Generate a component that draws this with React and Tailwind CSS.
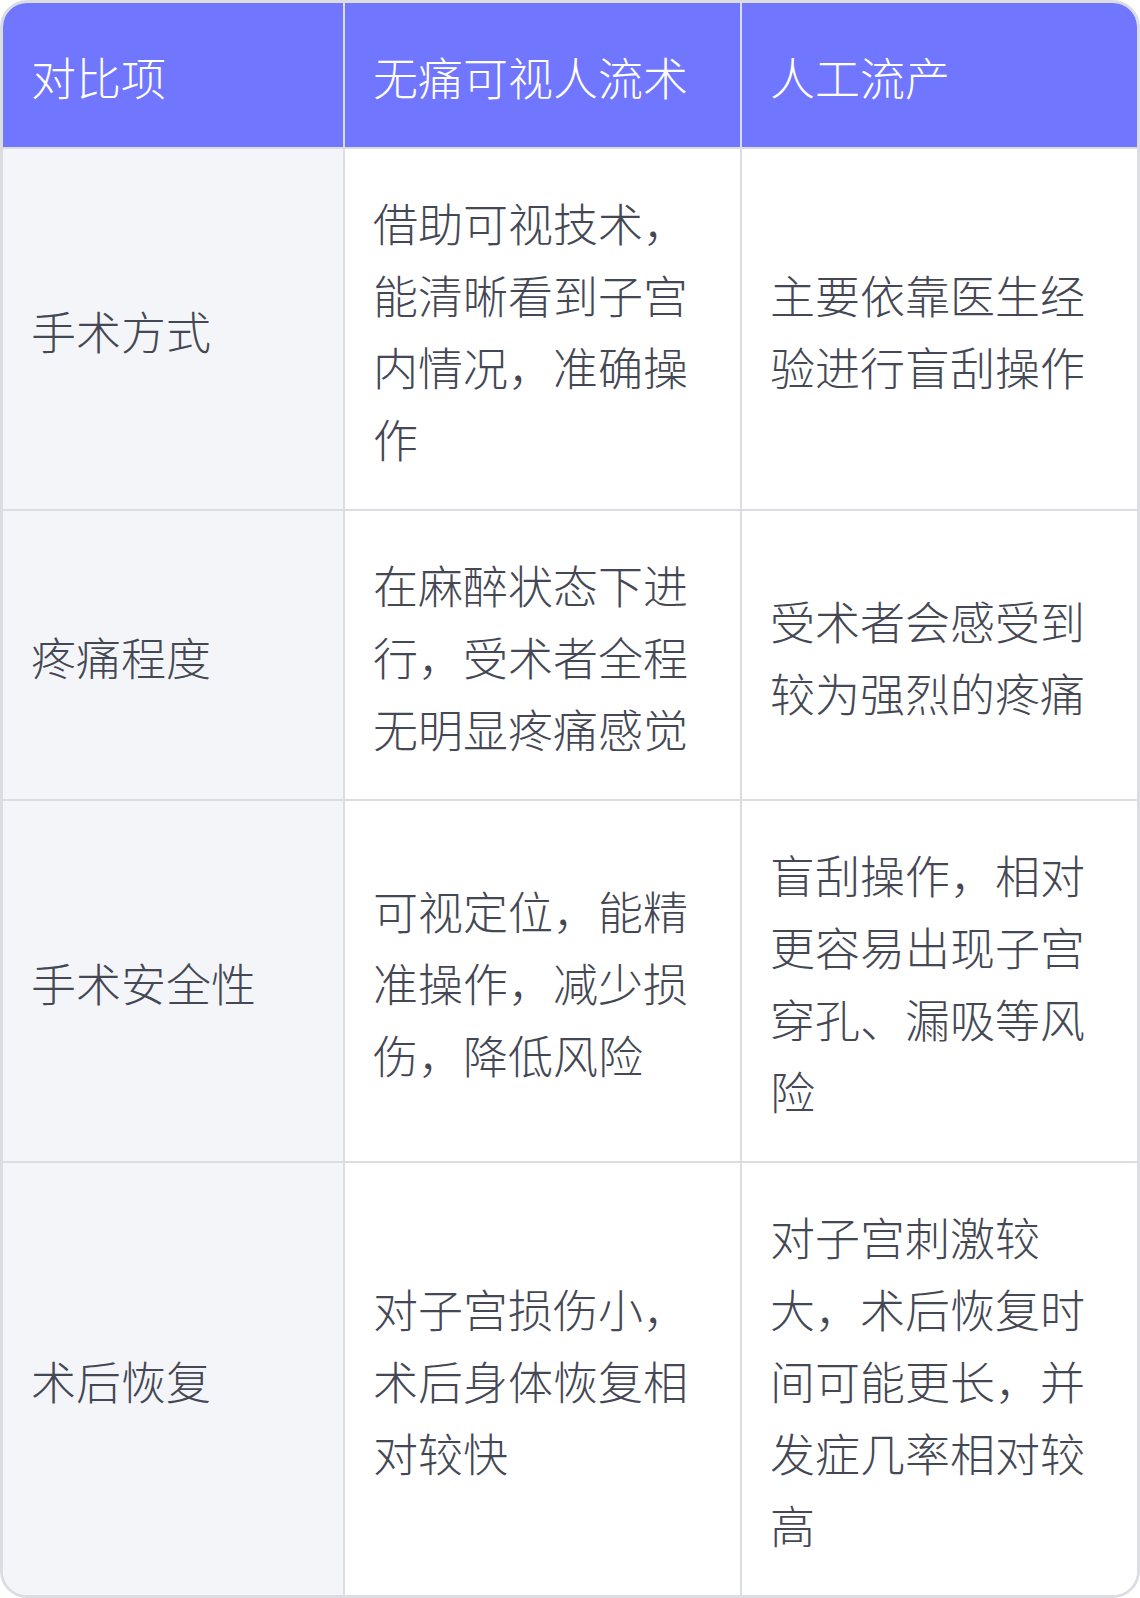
const rows = [
  {
    label: "手术方式",
    a: "借助可视技术，能清晰看到子宫内情况，准确操作",
    b: "主要依靠医生经验进行盲刮操作",
  },
  {
    label: "疼痛程度",
    a: "在麻醉状态下进行，受术者全程无明显疼痛感觉",
    b: "受术者会感受到较为强烈的疼痛",
  },
  {
    label: "手术安全性",
    a: "可视定位，能精准操作，减少损伤，降低风险",
    b: "盲刮操作，相对更容易出现子宫穿孔、漏吸等风险",
  },
  {
    label: "术后恢复",
    a: "对子宫损伤小，术后身体恢复相对较快",
    b: "对子宫刺激较大，术后恢复时间可能更长，并发症几率相对较高",
  },
];

const font = { fontFamily: '"Noto Sans CJK SC", "Noto Sans", sans-serif' };

export default function App() {
  return (
    <div className="w-[1140px] bg-white" style={font}>
      <div className="overflow-hidden rounded-[27px] border-[3px] border-[#dcdde3] text-[45px] font-light leading-[72px]">
        <div className="grid grid-cols-[342px_397px_395px]">
          {/* header */}
          <div className="flex items-center border-r-2 border-b-2 border-[#dcdde3] bg-[#7176ff] px-7 pt-[38px] pb-[34px] text-white">
            对比项
          </div>
          <div className="flex items-center border-r-2 border-b-2 border-[#dcdde3] bg-[#7176ff] px-7 pt-[38px] pb-[34px] text-white">
            无痛可视人流术
          </div>
          <div className="flex items-center border-b-2 border-[#dcdde3] bg-[#7176ff] px-7 pt-[38px] pb-[34px] text-white">
            人工流产
          </div>

          {rows.map((row, i) => {
            const last = i === rows.length - 1;
            return [
              <div
                key={row.label + "-l"}
                className={
                  "flex items-center border-r-2 border-[#dcdde3] bg-[#f4f5f9] px-7 pt-[38px] pb-[34px] text-[#444854] " +
                  (last ? "" : "border-b-2")
                }
              >
                {row.label}
              </div>,
              <div
                key={row.label + "-a"}
                className={
                  "flex items-center border-r-2 border-[#dcdde3] bg-white px-7 pt-[38px] pb-[34px] text-[#444854] " +
                  (last ? "" : "border-b-2")
                }
              >
                <p>{row.a}</p>
              </div>,
              <div
                key={row.label + "-b"}
                className={
                  "flex items-center border-[#dcdde3] bg-white px-7 pt-[38px] pb-[34px] text-[#444854] " +
                  (last ? "" : "border-b-2")
                }
              >
                <p>{row.b}</p>
              </div>,
            ];
          })}
        </div>
      </div>
    </div>
  );
}
